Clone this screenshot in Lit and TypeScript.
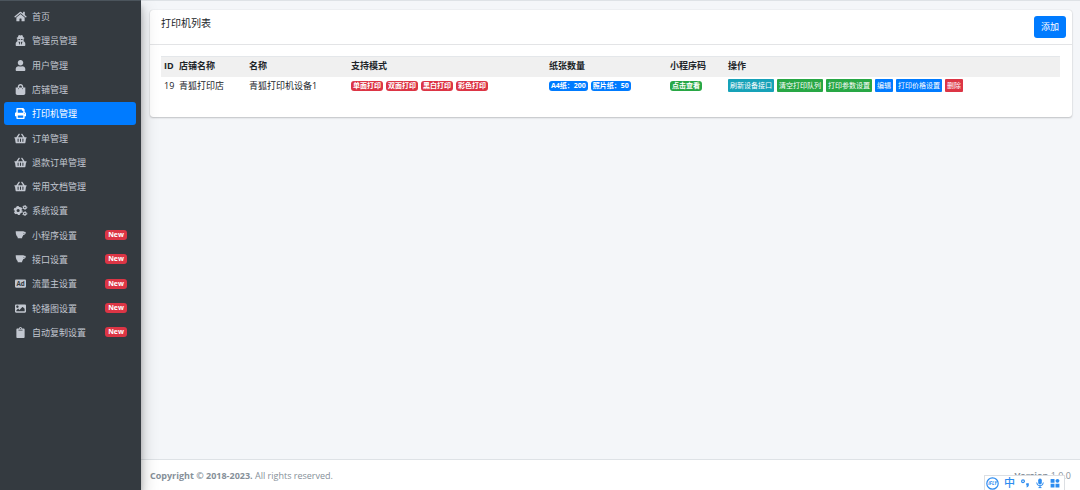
import { LitElement, html, css, svg, nothing } from "lit";
import { customElement, property } from "lit/decorators.js";
import { classMap } from "lit/directives/class-map.js";

const icons: Record<string, { box: string; body: unknown }> = {
  home: {
    box: "0 0 576 512",
    body: svg`<path d="M280.37 148.26L96 300.11V464a16 16 0 0 0 16 16l112.06-.29a16 16 0 0 0 15.92-16V368a16 16 0 0 1 16-16h64a16 16 0 0 1 16 16v95.64a16 16 0 0 0 16 16.05L464 480a16 16 0 0 0 16-16V300L295.67 148.26a12.19 12.19 0 0 0-15.3 0zM571.6 251.47L488 182.56V44.05a12 12 0 0 0-12-12h-56a12 12 0 0 0-12 12v72.61L318.47 43a48 48 0 0 0-61 0L4.34 251.47a12 12 0 0 0-1.6 16.9l25.5 31A12 12 0 0 0 45.15 301l235.22-193.74a12.19 12.19 0 0 1 15.3 0L530.9 301a12 12 0 0 0 16.9-1.6l25.5-31a12 12 0 0 0-1.7-16.93z"/>`,
  },
  agent: {
    box: "0 0 448 512",
    body: svg`<path fill-rule="evenodd" d="M144 8c24-16 50 14 80 14s56-30 80-14c20 14 34 60 42 100 34 8 58 18 58 30 0 14-12 24-34 32v84l-6 42c44 12 84 58 84 116v52c0 24-18 48-42 48H42c-24 0-42-24-42-48v-52c0-58 40-104 84-116l-6-42v-84c-22-8-34-18-34-32 0-12 24-22 58-30 8-40 22-86 42-100zM122 186c0 34 18 50 48 50 26 0 38-18 42-40h24c4 18 16 40 42 40 30 0 48-16 48-50-56 10-148 10-204 0zM130 312l54 150 24-100-20-50zM318 312h-58l-20 50 24 100z"/>`,
  },
  user: {
    box: "0 0 448 512",
    body: svg`<path d="M224 256c70.7 0 128-57.3 128-128S294.7 0 224 0 96 57.3 96 128s57.3 128 128 128zm89.6 32h-16.7c-22.2 10.2-46.9 16-72.9 16s-50.6-5.8-72.9-16h-16.7C60.2 288 0 348.2 0 422.4V464c0 26.5 21.5 48 48 48h352c26.5 0 48-21.5 48-48v-41.6c0-74.2-60.2-134.4-134.4-134.4z"/>`,
  },
  bag: {
    box: "0 0 448 512",
    body: svg`<path d="M352 160v-32C352 57.42 294.579 0 224 0 153.42 0 96 57.42 96 128v32H0v272c0 44.183 35.817 80 80 80h288c44.183 0 80-35.817 80-80V160h-96zm-192-32c0-35.29 28.71-64 64-64s64 28.71 64 64v32H160v-32zm160 120c-13.255 0-24-10.745-24-24s10.745-24 24-24 24 10.745 24 24-10.745 24-24 24zm-192 0c-13.255 0-24-10.745-24-24s10.745-24 24-24 24 10.745 24 24-10.745 24-24 24z"/>`,
  },
  print: {
    box: "0 0 512 512",
    body: svg`<path d="M448 192V77.25c0-8.49-3.37-16.62-9.37-22.63L393.37 9.37c-6-6-14.14-9.37-22.63-9.37H96C78.33 0 64 14.33 64 32v160c-35.35 0-64 28.65-64 64v112c0 8.84 7.16 16 16 16h48v96c0 17.67 14.33 32 32 32h320c17.67 0 32-14.33 32-32v-96h48c8.84 0 16-7.16 16-16V256c0-35.35-28.65-64-64-64zm-64 256H128v-96h256v96zm0-224H128V64h192v48c0 8.84 7.16 16 16 16h48v96zm48 72c-13.25 0-24-10.75-24-24 0-13.26 10.75-24 24-24s24 10.74 24 24c0 13.25-10.75 24-24 24z"/>`,
  },
  basket: {
    box: "0 0 576 512",
    body: svg`<path d="M576 216v16c0 13.255-10.745 24-24 24h-8l-26.113 182.788C514.509 462.435 494.257 480 470.37 480H105.63c-23.887 0-44.139-17.565-47.518-41.212L32 256h-8c-13.255 0-24-10.745-24-24v-16c0-13.255 10.745-24 24-24h67.341l106.78-146.821c10.395-14.292 30.407-17.453 44.701-7.058 14.293 10.395 17.453 30.408 7.058 44.701L170.477 192h235.046L326.12 82.821c-10.395-14.292-7.234-34.306 7.059-44.701 14.291-10.395 34.306-7.235 44.701 7.058L484.659 192H552c13.255 0 24 10.745 24 24zM312 392V280c0-13.255-10.745-24-24-24s-24 10.745-24 24v112c0 13.255 10.745 24 24 24s24-10.745 24-24zm112 0V280c0-13.255-10.745-24-24-24s-24 10.745-24 24v112c0 13.255 10.745 24 24 24s24-10.745 24-24zm-224 0V280c0-13.255-10.745-24-24-24s-24 10.745-24 24v112c0 13.255 10.745 24 24 24s24-10.745 24-24z"/>`,
  },
  cogs: {
    box: "0 0 640 512",
    body: svg`<g fill="none" stroke="currentColor">
      <circle cx="210" cy="256" r="122" stroke-width="96"/>
      <circle cx="210" cy="256" r="184" stroke-width="52" stroke-dasharray="104 88.7"/>
      <circle cx="520" cy="112" r="62" stroke-width="56"/>
      <circle cx="520" cy="112" r="98" stroke-width="36" stroke-dasharray="52 50.6"/>
      <circle cx="520" cy="400" r="62" stroke-width="56"/>
      <circle cx="520" cy="400" r="98" stroke-width="36" stroke-dasharray="52 50.6"/>
    </g>`,
  },
  cup: {
    box: "0 0 512 512",
    body: svg`<path fill-rule="evenodd" d="M32 56h376v26h56c26 0 40 18 36 44-8 62-48 100-112 110-12 42-32 72-56 88v50c0 8-6 14-14 14H138c-8 0-14-6-14-14v-50C72 284 34 206 32 56zM404 136c0 20-2 38-6 50 20-8 36-22 42-50z"/>`,
  },
  ad: {
    box: "0 0 512 512",
    body: svg`<rect y="64" width="512" height="384" rx="48"/><text x="256" y="362" text-anchor="middle" font-size="290" font-weight="700" fill="#343a40">Ad</text>`,
  },
  image: {
    box: "0 0 512 512",
    body: svg`<path d="M464 448H48c-26.51 0-48-21.49-48-48V112c0-26.51 21.49-48 48-48h416c26.51 0 48 21.49 48 48v288c0 26.51-21.49 48-48 48zM112 120c-30.928 0-56 25.072-56 56s25.072 56 56 56 56-25.072 56-56-25.072-56-56-56zM64 384h384V272l-87.515-87.515c-4.686-4.686-12.284-4.686-16.971 0L208 320l-55.515-55.515c-4.686-4.686-12.284-4.686-16.971 0L64 336v48z"/>`,
  },
  clipboard: {
    box: "0 0 384 512",
    body: svg`<path d="M384 112v352c0 26.51-21.49 48-48 48H48c-26.51 0-48-21.49-48-48V112c0-26.51 21.49-48 48-48h80c0-35.29 28.71-64 64-64s64 28.71 64 64h80c26.51 0 48 21.49 48 48zM192 40c-13.255 0-24 10.745-24 24s10.745 24 24 24 24-10.745 24-24-10.745-24-24-24m96 114v-20a6 6 0 0 0-6-6H102a6 6 0 0 0-6 6v20a6 6 0 0 0 6 6h180a6 6 0 0 0 6-6z"/>`,
  },
};

interface MenuItem {
  icon: string;
  label: string;
  active?: boolean;
  fresh?: boolean;
}

const menu: MenuItem[] = [
  { icon: "home", label: "首页" },
  { icon: "agent", label: "管理员管理" },
  { icon: "user", label: "用户管理" },
  { icon: "bag", label: "店铺管理" },
  { icon: "print", label: "打印机管理", active: true },
  { icon: "basket", label: "订单管理" },
  { icon: "basket", label: "退款订单管理" },
  { icon: "basket", label: "常用文档管理" },
  { icon: "cogs", label: "系统设置" },
  { icon: "cup", label: "小程序设置", fresh: true },
  { icon: "cup", label: "接口设置", fresh: true },
  { icon: "ad", label: "流量主设置", fresh: true },
  { icon: "image", label: "轮播图设置", fresh: true },
  { icon: "clipboard", label: "自动复制设置", fresh: true },
];

@customElement("side-menu")
class SideMenu extends LitElement {
  @property({ attribute: false }) items: MenuItem[] = [];

  static styles = css`
    :host {
      display: block;
      z-index: 2;
      background: #343a40;
      border-top: 1px solid #4b545c;
      box-shadow: 0 8px 16px rgba(0, 0, 0, 0.25), 0 6px 6px rgba(0, 0, 0, 0.22);
    }
    .list {
      list-style: none;
      margin: 0;
      padding: 3px 5px 0 4px;
      display: grid;
      grid-template-rows: repeat(14, 1fr);
      height: 340px;
    }
    .row {
      display: flex;
      padding-top: 1px;
    }
    .link {
      flex: 1;
      display: flex;
      align-items: center;
      padding: 0 9px;
      border-radius: 3px;
      color: #c2c7d0;
      text-decoration: none;
      white-space: nowrap;
    }
    .active {
      background: #007bff;
      color: #fff;
    }
    .icon {
      width: 15px;
      height: 11px;
      margin-right: 4px;
      fill: currentColor;
      flex: none;
    }
    .new {
      margin-left: auto;
      padding: 0 3px;
      border-radius: 3px;
      background: #dc3545;
      color: #fff;
      font-size: 7px;
      line-height: 10px;
      font-weight: 700;
    }
  `;

  render() {
    return html`<nav aria-label="主菜单">
      <ul class="list">
        ${this.items.map(
          (item) => html`<li class="row">
            <a class=${classMap({ link: true, active: !!item.active })} href="#">
              <svg class="icon" viewBox=${icons[item.icon].box} aria-hidden="true">${icons[item.icon].body}</svg>
              <span>${item.label}</span>
              ${item.fresh ? html`<span class="new">New</span>` : nothing}
            </a>
          </li>`
        )}
      </ul>
    </nav>`;
  }
}

@customElement("printer-card")
class PrinterCard extends LitElement {
  static styles = css`
    :host {
      display: block;
      background: #fff;
      border-radius: 3px;
      box-shadow: 0 0 1px rgba(0, 0, 0, 0.2), 0 1px 2px rgba(0, 0, 0, 0.2);
    }
    .head {
      display: flex;
      justify-content: space-between;
      align-items: flex-start;
      padding: 6px 6px 6px 11px;
      border-bottom: 1px solid #e3e4e6;
    }
    .title {
      margin: 0;
      font-size: 10px;
      line-height: 14px;
      font-weight: 400;
    }
    button {
      border: 0;
      margin: 0;
      font-family: inherit;
      color: #fff;
      white-space: nowrap;
    }
    .add {
      background: #007bff;
      border-radius: 3px;
      padding: 0 7px;
      font-size: 9px;
      line-height: 22px;
    }
    .body {
      padding: 11px 12px 20px 11px;
    }
    .table {
      width: 100%;
      border-collapse: collapse;
      table-layout: fixed;
    }
    .id { width: 15px; }
    .shop { width: 70px; }
    .name { width: 102px; }
    .modes { width: 198px; }
    .paper { width: 121px; }
    .code { width: 58px; }
    th,
    td {
      box-sizing: border-box;
      padding: 0 0 2px 3px;
      height: 20px;
      text-align: left;
      white-space: nowrap;
      vertical-align: middle;
    }
    th {
      background: #f0f0f0;
      border-top: 1px solid #e4e7ea;
      font-weight: 700;
    }
    .tags {
      display: flex;
      align-items: center;
      gap: 3px;
    }
    .tag {
      padding: 0 2px;
      border-radius: 3px;
      color: #fff;
      font-size: 7px;
      line-height: 10px;
      font-weight: 700;
    }
    .act {
      padding: 0 2px;
      border-radius: 1px;
      font-size: 7px;
      line-height: 13px;
    }
    .red { background: #dc3545; }
    .blue { background: #007bff; }
    .green { background: #28a745; }
    .teal { background: #17a2b8; }
  `;

  render() {
    const modes = ["单面打印", "双面打印", "黑白打印", "彩色打印"];
    const paper = ["A4纸：200", "照片纸：50"];
    const actions = [
      ["teal", "刷新设备接口"],
      ["green", "清空打印队列"],
      ["green", "打印参数设置"],
      ["blue", "编辑"],
      ["blue", "打印价格设置"],
      ["red", "删除"],
    ];
    return html`
      <header class="head">
        <h1 class="title">打印机列表</h1>
        <button class="add" type="button">添加</button>
      </header>
      <div class="body">
        <table class="table">
          <colgroup>
            <col class="id" /><col class="shop" /><col class="name" /><col class="modes" />
            <col class="paper" /><col class="code" /><col />
          </colgroup>
          <thead>
            <tr>
              <th>ID</th><th>店铺名称</th><th>名称</th><th>支持模式</th>
              <th>纸张数量</th><th>小程序码</th><th>操作</th>
            </tr>
          </thead>
          <tbody>
            <tr>
              <td>19</td>
              <td>青狐打印店</td>
              <td>青狐打印机设备1</td>
              <td><div class="tags">${modes.map((m) => html`<span class="tag red">${m}</span>`)}</div></td>
              <td><div class="tags">${paper.map((p) => html`<span class="tag blue">${p}</span>`)}</div></td>
              <td><div class="tags"><span class="tag green">点击查看</span></div></td>
              <td>
                <div class="tags">
                  ${actions.map(([tone, label]) => html`<button type="button" class="act ${tone}">${label}</button>`)}
                </div>
              </td>
            </tr>
          </tbody>
        </table>
      </div>
    `;
  }
}

@customElement("app-root")
class AppRoot extends LitElement {
  static styles = css`
    :host {
      display: grid;
      grid-template-columns: 141px 1fr;
      min-height: 100vh;
      position: relative;
      overflow: hidden;
      font-family: "Open Sans", "Noto Sans CJK SC", sans-serif;
      font-size: 9px;
      line-height: 13px;
      color: #212529;
      background: #f4f6f9;
    }
    .page {
      display: flex;
      flex-direction: column;
      min-width: 0;
      border-top: 1px solid #dee2e6;
    }
    .content {
      flex: 1;
      padding: 9px 8px 9px 9px;
    }
    .foot {
      display: flex;
      justify-content: space-between;
      padding: 9px 9px 8px;
      border-top: 1px solid #dee2e6;
      background: #fff;
      color: #869099;
    }
    .ime {
      position: absolute;
      right: 15px;
      bottom: 0;
      z-index: 3;
      box-sizing: border-box;
      width: 81px;
      height: 15px;
      display: flex;
      align-items: center;
      justify-content: space-between;
      padding: 0 4px 0 1px;
      border: 1px solid #dcdfe3;
      border-bottom: 0;
      background: #fff;
      color: #2d8cf0;
    }
    .glyph {
      height: 12px;
      fill: currentColor;
    }
    .logo {
      height: 13px;
    }
    .lang {
      font-size: 11px;
      line-height: 14px;
      font-weight: 500;
    }
  `;

  render() {
    return html`
      <side-menu .items=${menu}></side-menu>
      <div class="page">
        <main class="content"><printer-card></printer-card></main>
        <footer class="foot">
          <span><b>Copyright © 2018-2023.</b> All rights reserved.</span>
          <span><b>Version</b> 1.0.0</span>
        </footer>
      </div>
      <div class="ime">
        <svg class="glyph logo" viewBox="0 0 13 13" width="13">
          <circle cx="6.500" cy="6.500" r="5.700" fill="none" stroke="currentColor" stroke-width="1.200" />
          <text x="6.500" y="8.200" text-anchor="middle" font-size="4.500" font-weight="700" font-style="italic">iFLY</text>
        </svg>
        <span class="lang">中</span>
        <svg class="glyph" viewBox="0 0 10 12" width="10">
          <circle cx="3" cy="4.200" r="1.400" fill="none" stroke="currentColor" stroke-width="1.200" />
          <path d="M6.200 6.200h2.600v2.200q-.4 1.700-2.200 2l-.2-.8q.8-.2.900-1h-1.100z" />
        </svg>
        <svg class="glyph" viewBox="0 0 10 12" width="10">
          <rect x="3.200" y="1.500" width="3.600" height="6" rx="1.800" />
          <path d="M1.700 5.500a3.300 3.300 0 0 0 6.600 0M5 8.800v2M3.500 10.600h3" fill="none" stroke="currentColor" stroke-width="1" />
        </svg>
        <svg class="glyph" viewBox="0 0 10 12" width="10">
          <path d="M.6 2h3.900v3.700H.6zM.6 6.700h3.900v3.700H.6zM5.500 6.700h3.900v3.700H5.500z" />
          <circle cx="7.450" cy="3.850" r="1.950" />
        </svg>
      </div>
    `;
  }
}
